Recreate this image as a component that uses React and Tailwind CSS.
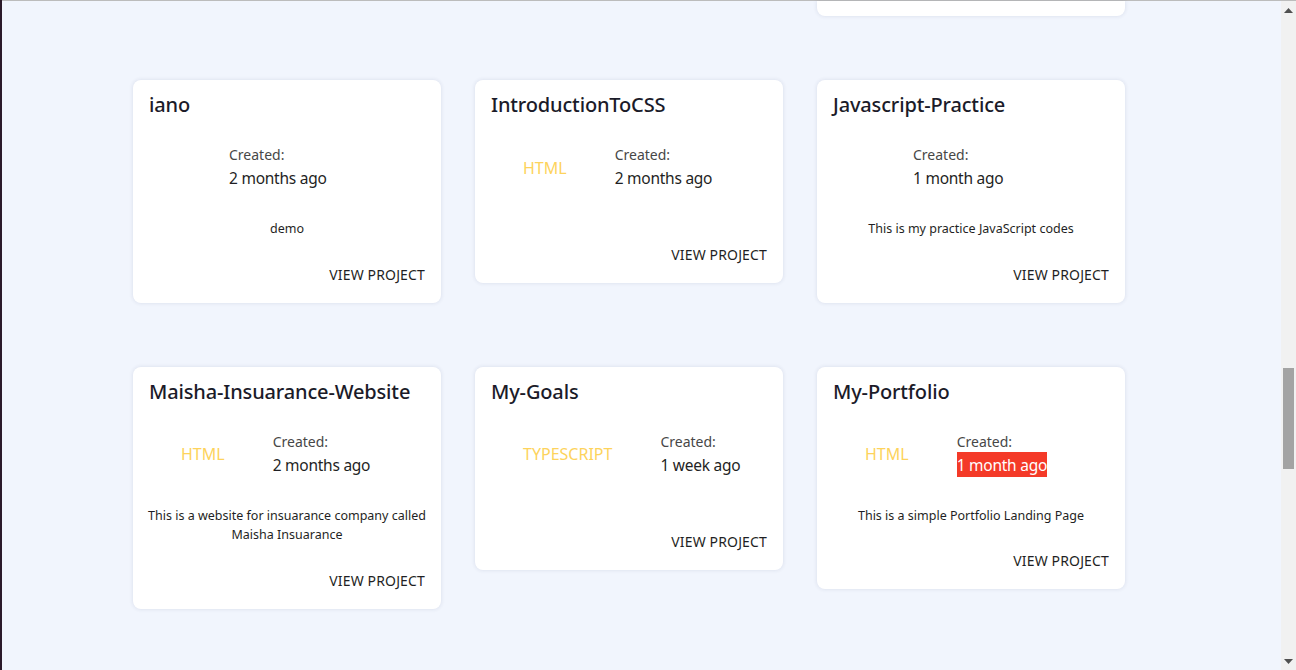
import React from 'react';

const projects = [
  { name: 'iano', lang: '', created: '2 months ago', desc: 'demo' },
  { name: 'IntroductionToCSS', lang: 'HTML', created: '2 months ago', desc: '' },
  { name: 'Javascript-Practice', lang: '', created: '1 month ago', desc: 'This is my practice JavaScript codes' },
  { name: 'Maisha-Insuarance-Website', lang: 'HTML', created: '2 months ago', desc: 'This is a website for insuarance company called Maisha Insuarance' },
  { name: 'My-Goals', lang: 'TYPESCRIPT', created: '1 week ago', desc: '' },
  { name: 'My-Portfolio', lang: 'HTML', created: '1 month ago', desc: 'This is a simple Portfolio Landing Page', fresh: true },
];

function ProjectCard({ project }) {
  return (
    <div className="bg-white rounded-lg shadow-[0_0_4px_rgba(30,40,90,0.12)] flex flex-col px-4 pt-[11px] pb-3">
      <h2 className="text-xl leading-7 font-medium tracking-[-0.15px] text-[#1b1b29]">{project.name}</h2>

      <div className="mt-[26px] flex items-center pl-8 gap-12">
        <span className="text-base leading-6 text-[#fdd35c]">{project.lang}</span>
        <div className="flex flex-col">
          <span className="text-sm leading-5 text-[#474747]">Created:</span>
          <span
            className={
              project.fresh
                ? 'text-[15.5px] leading-6 tracking-[-0.25px] pt-px text-white bg-[#f43a28] self-start'
                : 'text-[15.5px] leading-6 tracking-[-0.25px] pt-px text-[#1f1f24]'
            }
          >
            {project.created}
          </span>
        </div>
      </div>

      <p className="mt-[29px] -mx-2 text-[12.5px] leading-[19.5px] text-center text-[#1f1f24]">{project.desc}</p>

      <button className="mt-5 self-end py-1.5 text-sm leading-5 tracking-[0.15px] text-[#1f1f24] uppercase">
        View Project
      </button>
    </div>
  );
}

export default function App() {
  return (
    <div className="h-[670px] w-full flex overflow-hidden bg-[#f1f5fd] font-['Noto_Sans',sans-serif]">
      <div className="w-[2px] bg-[#2b1a2a] flex-shrink-0" />

      <div className="flex-1 flex flex-col border-t border-[#bcbcbc] min-w-0">
        <div className="flex flex-1 min-h-0">
          <main className="flex-1 pl-[131px]">
            <div className="grid grid-cols-[308px_308px_308px] gap-x-[34px] gap-y-16 items-start">
              <div className="col-start-3 h-[15px] bg-white rounded-b-lg shadow-[0_0_4px_rgba(30,40,90,0.12)]" />
              {projects.map((p) => (
                <ProjectCard key={p.name} project={p} />
              ))}
            </div>
          </main>

          {/* scrollbar */}
          <div className="w-[15px] bg-[#f1f1f1] flex flex-col items-center flex-shrink-0">
            <svg width="9" height="5" viewBox="0 0 9 5" className="mt-[7px]">
              <path d="M0 5 L4.5 0 L9 5 Z" fill="#505050" />
            </svg>
            <div className="mt-[355px] w-[11px] h-[101px] bg-[#a3a3a3]" />
            <div className="flex-1" />
            <svg width="9" height="5" viewBox="0 0 9 5" className="mb-[6px]">
              <path d="M0 0 L4.5 5 L9 0 Z" fill="#505050" />
            </svg>
          </div>
        </div>
      </div>
    </div>
  );
}
